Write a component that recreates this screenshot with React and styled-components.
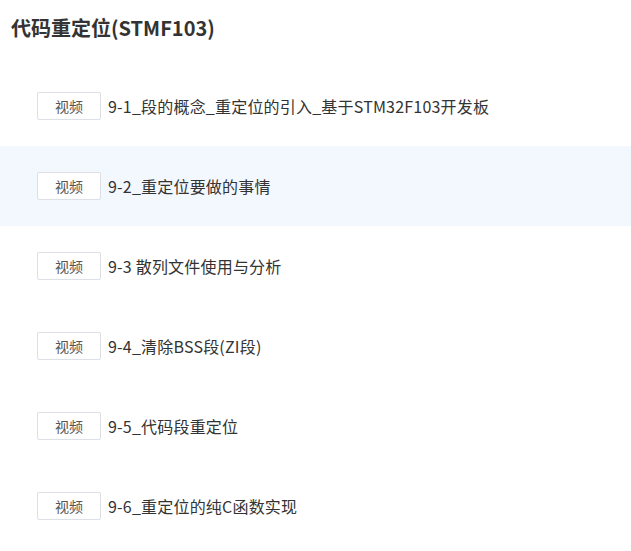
import React from "react";
import styled, { createGlobalStyle } from "styled-components";

const Global = createGlobalStyle`
  html, body { margin: 0; padding: 0; background: #fff; }
  body { font-family: "Noto Sans CJK SC", "Noto Sans", sans-serif; }
`;

const Page = styled.div`
  width: 631px;
  display: flex;
  flex-direction: column;
`;

const Title = styled.h2`
  margin: 0;
  padding: 13px 0 0 11px;
  height: 66px;
  box-sizing: border-box;
  font-size: 20px;
  line-height: 30px;
  font-weight: 700;
  color: #333;
`;

const List = styled.div`
  display: flex;
  flex-direction: column;
`;

const Row = styled.div`
  height: 80px;
  display: flex;
  align-items: center;
  padding-left: 37px;
  gap: 7px;
  background: ${(p) => (p.$active ? "#f3f7fe" : "transparent")};
`;

const Tag = styled.span`
  width: 64px;
  height: 28px;
  box-sizing: border-box;
  border: 1px solid #dcdfe6;
  border-radius: 2px;
  display: flex;
  align-items: center;
  justify-content: center;
  font-size: 14px;
  color: #555;
  background: #fff;
`;

const Label = styled.span`
  font-size: 16px;
  color: #333;
  line-height: 24px;
  letter-spacing: 0.2px;
`;

const items = [
  "9-1_段的概念_重定位的引入_基于STM32F103开发板",
  "9-2_重定位要做的事情",
  "9-3 散列文件使用与分析",
  "9-4_清除BSS段(ZI段)",
  "9-5_代码段重定位",
  "9-6_重定位的纯C函数实现",
];

export default function App() {
  return (
    <Page>
      <Global />
      <Title>代码重定位(STMF103)</Title>
      <List>
        {items.map((t, i) => (
          <Row key={i} $active={i === 1}>
            <Tag>视频</Tag>
            <Label>{t}</Label>
          </Row>
        ))}
      </List>
    </Page>
  );
}
